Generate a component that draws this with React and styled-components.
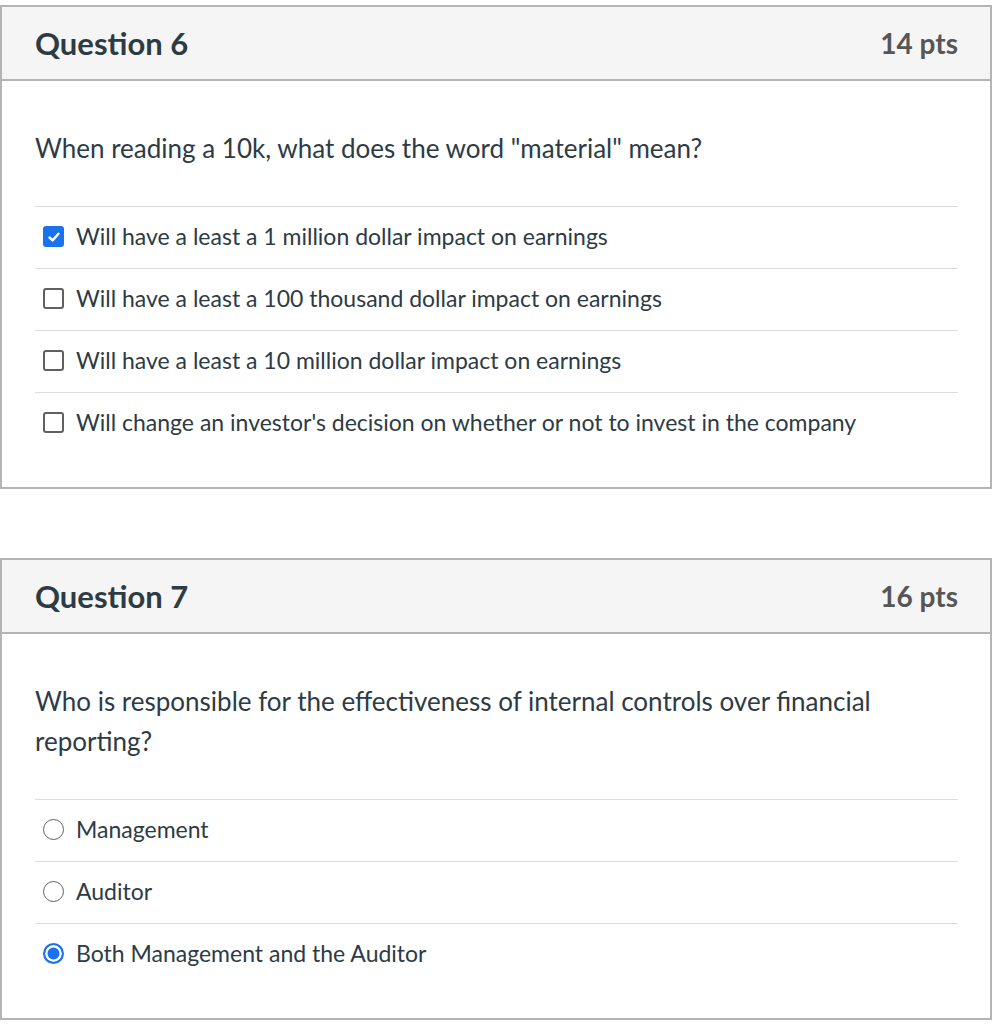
import React from 'react'
import styled, { createGlobalStyle } from 'styled-components'

const GlobalStyle = createGlobalStyle`
  body {
    margin: 0;
    background: #ffffff;
    font-family: Lato, "Liberation Sans", sans-serif;
    color: #2d3b45;
  }
`

const questions = [
  {
    id: 6,
    points: 14,
    type: 'checkbox',
    text: 'When reading a 10k, what does the word "material" mean?',
    answers: [
      { label: 'Will have a least a 1 million dollar impact on earnings', selected: true },
      { label: 'Will have a least a 100 thousand dollar impact on earnings' },
      { label: 'Will have a least a 10 million dollar impact on earnings' },
      { label: "Will change an investor's decision on whether or not to invest in the company" },
    ],
  },
  {
    id: 7,
    points: 16,
    type: 'radio',
    text: 'Who is responsible for the effectiveness of internal controls over financial reporting?',
    answers: [
      { label: 'Management' },
      { label: 'Auditor' },
      { label: 'Both Management and the Auditor', selected: true },
    ],
  },
]

const Page = styled.div`
  display: flex;
  flex-direction: column;
  gap: 69px;
  padding-top: 5px;
  width: 992px;
`

const Card = styled.section`
  border: 2px solid #b4b4b4;
`

const Header = styled.header`
  display: flex;
  align-items: center;
  justify-content: space-between;
  height: 72px;
  padding: 0 32px 0 33px;
  background: #f5f5f5;
  border-bottom: 2px solid #b4b4b4;
`

const Title = styled.h2`
  margin: 0;
  font-size: 31px;
  font-weight: 700;
  color: #2d3b45;
`

const Points = styled.span`
  font-size: 28px;
  font-weight: 700;
  color: #565656;
`

const Body = styled.div`
  padding: 47px 32px 33px 33px;
`

const Prompt = styled.p`
  margin: 0 0 38px;
  font-size: 26px;
  line-height: 40px;
`

const AnswerList = styled.div`
  display: flex;
  flex-direction: column;
`

const Answer = styled.label`
  display: flex;
  align-items: center;
  gap: 12px;
  height: 62px;
  padding: 0 0 4px 8px;
  box-sizing: border-box;
  border-top: 1px solid #dcdcdc;
  font-size: 23px;
`

const Box = styled.span`
  display: flex;
  align-items: center;
  justify-content: center;
  flex-shrink: 0;
  box-sizing: border-box;
  width: 21px;
  height: 21px;
  margin-top: 2px;
  border-radius: 3px;
  border: ${p => (p.$checked ? 'none' : '2px solid #606060')};
  background: ${p => (p.$checked ? '#1b72ee' : '#ffffff')};
`

const Radio = styled.span`
  flex-shrink: 0;
  box-sizing: border-box;
  width: 21px;
  height: 21px;
  margin-top: 2px;
  border-radius: 50%;
  border: ${p => (p.$checked ? '2px solid #1b72ee' : '1.5px solid #606060')};
  background: ${p => (p.$checked ? '#1b72ee' : '#ffffff')};
  box-shadow: ${p => (p.$checked ? 'inset 0 0 0 2.5px #ffffff' : 'none')};
`

const Check = () => (
  <svg width="14" height="14" viewBox="0 0 14 14">
    <path d="M2.5 7.5 L5.6 10.4 L11.5 3.8" fill="none" stroke="#ffffff" strokeWidth="2.4" strokeLinecap="round" strokeLinejoin="round" />
  </svg>
)

const App = () => {
  return (
    <>
      <GlobalStyle />
      <Page>
        {questions.map(q => (
          <Card key={q.id}>
            <Header>
              <Title>Question {q.id}</Title>
              <Points>{q.points} pts</Points>
            </Header>
            <Body>
              <Prompt>{q.text}</Prompt>
              <AnswerList>
                {q.answers.map(a => (
                  <Answer key={a.label}>
                    {q.type === 'checkbox' ? (
                      <Box $checked={a.selected}>{a.selected && <Check />}</Box>
                    ) : (
                      <Radio $checked={a.selected} />
                    )}
                    {a.label}
                  </Answer>
                ))}
              </AnswerList>
            </Body>
          </Card>
        ))}
      </Page>
    </>
  )
}

export default App
